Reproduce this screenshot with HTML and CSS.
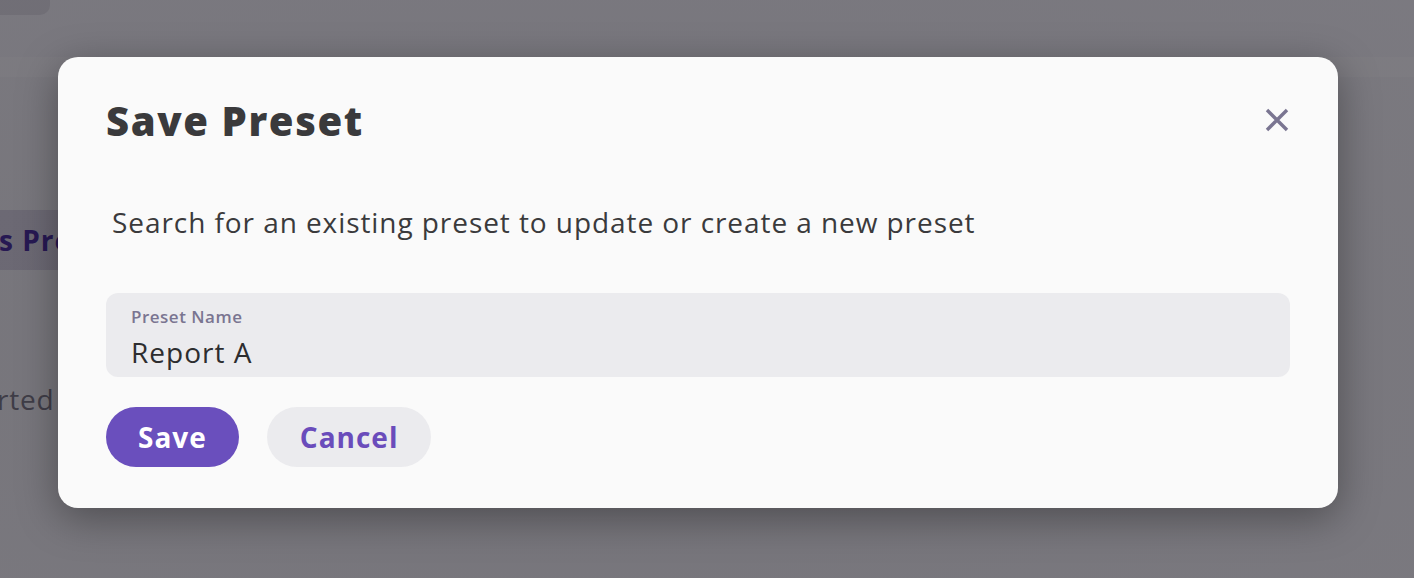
FILE: index.html
```html
<!DOCTYPE html>
<html lang="en">
<head>
<meta charset="utf-8">
<title>Save Preset</title>
<link rel="stylesheet" href="styles.css">
</head>
<body>
<div class="page">
  <div class="topbar"><div class="chip"></div></div>
  <div class="toolbar"></div>
  <div class="content">
    <div class="tab"><span class="tab-text"><span class="lead">Report</span>s Presets</span></div>
    <div class="note"><span class="note-text"><span class="lead">Get sta</span>rted</span></div>
  </div>
</div>
<div class="overlay"></div>
<div class="modal" role="dialog" aria-labelledby="dlg-title">
  <div class="modal-head">
    <h1 id="dlg-title" class="modal-title">Save Preset</h1>
    <button class="close" aria-label="Close">
      <svg width="24" height="24" viewBox="0 0 24 24"><path d="M2 2 L22 22 M22 2 L2 22" stroke="#7a7591" stroke-width="3.4" stroke-linecap="butt" fill="none"/></svg>
    </button>
  </div>
  <p class="modal-desc">Search for an existing preset to update or create a new preset</p>
  <label class="field">
    <span class="field-label">Preset Name</span>
    <input class="field-input" type="text" value="Report A">
  </label>
  <div class="actions">
    <button class="btn btn-primary">Save</button>
    <button class="btn btn-secondary">Cancel</button>
  </div>
</div>
</body>
</html>
```

FILE: styles.css
```css
* { box-sizing: border-box; }
html, body { margin: 0; height: 100%; }
body {
  font-family: "Open Sans", "Noto Sans", sans-serif;
  background: #f1f0f4;
  overflow: hidden;
  position: relative;
}
.page { height: 100%; display: flex; flex-direction: column; }
.topbar { height: 57px; background: #f1f0f5; }
.chip { width: 50px; height: 15px; background: #dedce3; border-radius: 0 0 10px 0; }
.toolbar { height: 20px; background: #f6f5f8; }
.content { flex: 1; display: flex; flex-direction: column; padding-top: 133px; }
.tab {
  height: 60px; width: 120px; background: #d8d4e2;
  display: flex; align-items: center;
}
.lead {
  display: inline-block; width: 0; direction: rtl; white-space: nowrap;
}
.tab-text {
  margin-left: -1px; white-space: nowrap;
  font-weight: 700; font-size: 28px; color: #4a2f9e; letter-spacing: 1px;
}
.note { margin-top: 110px; }
.note-text {
  display: inline-block; white-space: nowrap; margin-left: -3px;
  font-size: 28px; color: #7c7a86; letter-spacing: 0.8px;
}
.overlay {
  position: absolute; inset: 0;
  background: radial-gradient(ellipse at 40% 60%, rgba(6,4,12,0.53), rgba(6,4,12,0.5));
}
.modal {
  position: absolute; left: 58px; top: 57px; width: 1280px; height: 451px;
  background: #fafafa; border-radius: 20px;
  padding: 37px 48px 41px;
  box-shadow: 0 10px 40px rgba(0,0,0,0.35);
  display: flex; flex-direction: column;
}
.modal-head { display: flex; justify-content: space-between; align-items: flex-start; }
.modal-title {
  margin: 0; font-size: 40px; font-weight: 800; color: #3a3a3c; line-height: 54px;
  letter-spacing: 1.6px;
}
.close {
  border: 0; background: none; padding: 0; margin: 14px 1px 0 0;
  width: 24px; height: 24px; cursor: pointer; display: block;
}
.close svg { display: block; }
.modal-desc {
  margin: 55px 0 0 6px; font-size: 28px; line-height: 38px; color: #3a3a3c;
  letter-spacing: 0.93px;
}
.field {
  margin-top: 52px; height: 84px; background: #ebebee; border-radius: 12px;
  padding: 12px 25px 0; display: flex; flex-direction: column;
}
.field-label { font-size: 17px; font-weight: 600; color: #7a7591; line-height: 23px; letter-spacing: 0.5px; }
.field-input {
  border: 0; background: transparent; padding: 0; margin-top: 5px;
  font-family: inherit; font-size: 28px; line-height: 38px; height: 38px; color: #2d2d2f;
  outline: none; width: 100%; letter-spacing: 1px;
}
.actions { margin-top: 30px; display: flex; gap: 28px; }
.btn {
  height: 60px; border: 0; border-radius: 30px; padding: 0 32px;
  font-family: inherit; font-size: 28px; font-weight: 700; cursor: pointer;
  letter-spacing: 1px;
}
.btn-primary { background: #6a4fbd; color: #ffffff; }
.btn-secondary { background: #ebebee; color: #6a4cbb; padding: 0 33px; }
```
